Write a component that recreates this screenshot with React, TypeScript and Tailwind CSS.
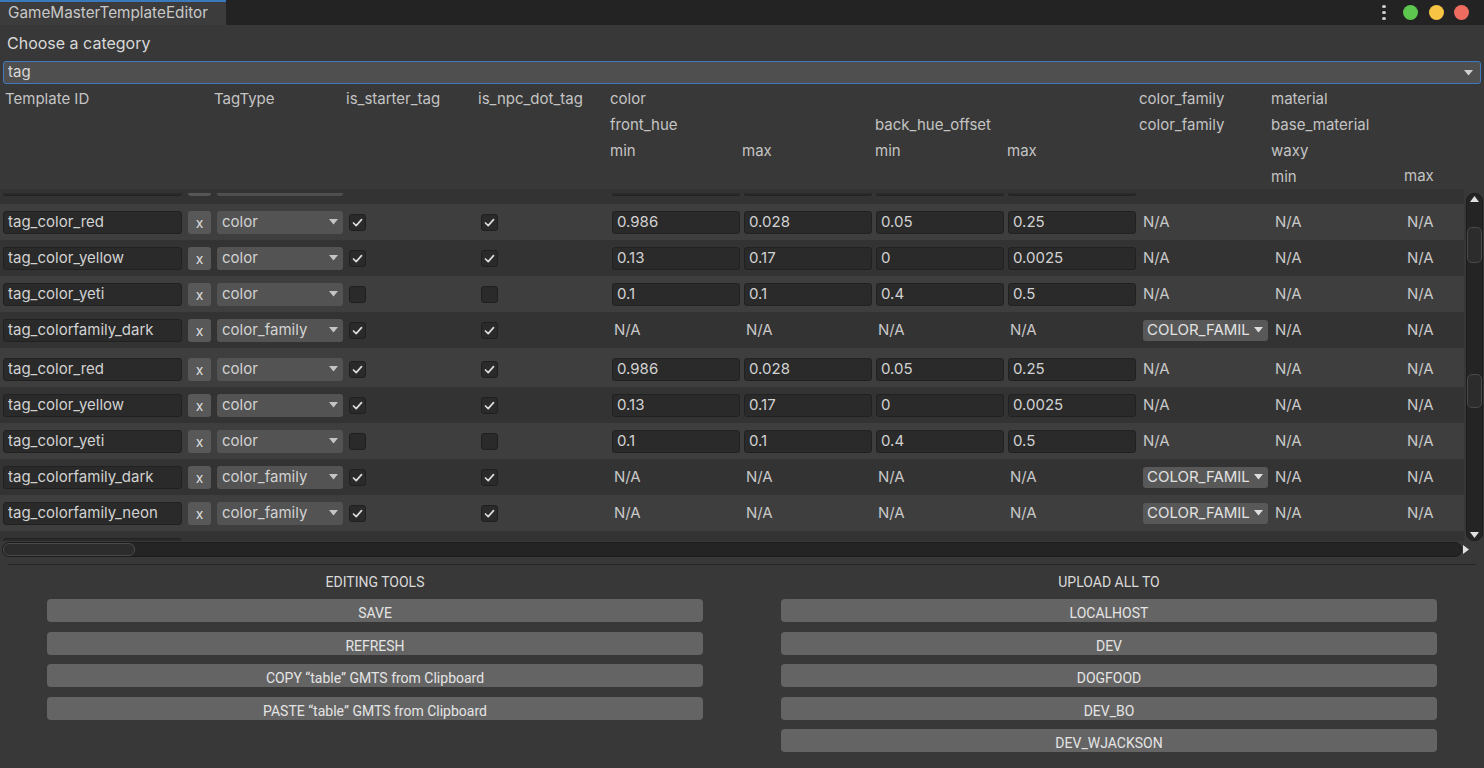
import React from "react";

type RowData = {
  id: string;
  type: string;
  starter: boolean;
  npc: boolean;
  nums: string[] | null;
  cf: boolean;
};

const rows: RowData[] = [
  { id: "tag_color_red", type: "color", starter: true, npc: true, nums: ["0.986", "0.028", "0.05", "0.25"], cf: false },
  { id: "tag_color_yellow", type: "color", starter: true, npc: true, nums: ["0.13", "0.17", "0", "0.0025"], cf: false },
  { id: "tag_color_yeti", type: "color", starter: false, npc: false, nums: ["0.1", "0.1", "0.4", "0.5"], cf: false },
  { id: "tag_colorfamily_dark", type: "color_family", starter: true, npc: true, nums: null, cf: true },
  { id: "tag_color_red", type: "color", starter: true, npc: true, nums: ["0.986", "0.028", "0.05", "0.25"], cf: false },
  { id: "tag_color_yellow", type: "color", starter: true, npc: true, nums: ["0.13", "0.17", "0", "0.0025"], cf: false },
  { id: "tag_color_yeti", type: "color", starter: false, npc: false, nums: ["0.1", "0.1", "0.4", "0.5"], cf: false },
  { id: "tag_colorfamily_dark", type: "color_family", starter: true, npc: true, nums: null, cf: true },
  { id: "tag_colorfamily_neon", type: "color_family", starter: true, npc: true, nums: null, cf: true },
];

function Arrow({ color = "#c4c4c4" }: { color?: string }) {
  return (
    <svg width="9" height="6" viewBox="0 0 9 6">
      <polygon points="0,0 9,0 4.5,5.5" fill={color} />
    </svg>
  );
}

function Check({ on }: { on: boolean }) {
  return (
    <div className="w-[17px] h-[17px] rounded-[3px] bg-[#2a2a2a] border border-[#1f1f1f] flex items-center justify-center">
      {on && (
        <svg width="13" height="13" viewBox="0 0 13 13">
          <polyline points="2.5,7 5.2,9.6 10.5,3.6" fill="none" stroke="#dcdcdc" strokeWidth="1.7" strokeLinecap="round" strokeLinejoin="round" />
        </svg>
      )}
    </div>
  );
}

function Row({ r, light, extra }: { r: RowData; light: boolean; extra?: boolean }) {
  return (
    <div
      className={`flex items-center shrink-0 ${extra ? "h-[39px] pt-[3px]" : "h-[36px]"} ${light ? "bg-[#3e3e3e]" : "bg-[#333333]"} text-[15px] text-[#d2d2d2]`}
    >
      <div className="w-[185px] pl-[3px] shrink-0">
        <div className="w-[179px] h-[23px] rounded-[3px] bg-[#2a2a2a] border border-[#212121] flex items-center pl-[4px] overflow-hidden whitespace-nowrap">
          {r.id}
        </div>
      </div>
      <div className="w-[29px] pl-[3px] shrink-0">
        <div className="w-[23px] h-[23px] rounded-[3px] bg-[#585858] flex items-center justify-center text-[14px] text-[#dedede]">x</div>
      </div>
      <div className="w-[132px] pl-[3px] shrink-0">
        <div className="w-[126px] h-[23px] rounded-[3px] bg-[#535353] flex items-center justify-between pl-[5px] pr-[5px]">
          <span>{r.type}</span>
          <Arrow />
        </div>
      </div>
      <div className="w-[132px] pl-[3px] shrink-0">
        <Check on={r.starter} />
      </div>
      <div className="w-[132px] pl-[3px] shrink-0">
        <Check on={r.npc} />
      </div>
      {r.nums
        ? r.nums.map((n, i) => (
            <div key={i} className="w-[132px] pl-[2px] shrink-0">
              <div className="w-[128px] h-[23px] rounded-[3px] bg-[#2a2a2a] border border-[#212121] flex items-center pl-[4px]">
                {n}
              </div>
            </div>
          ))
        : [0, 1, 2, 3].map((i) => (
            <div key={i} className="w-[132px] pl-[4px] shrink-0 text-[#c8c8c8]">
              N/A
            </div>
          ))}
      <div className="w-[132px] pl-[5px] shrink-0">
        {r.cf ? (
          <div className="w-[125px] h-[21px] rounded-[3px] bg-[#585858] flex items-center justify-between pl-[4px] pr-[5px] text-[#e2e2e2]">
            <span className="whitespace-nowrap">COLOR_FAMIL</span>
            <Arrow color="#dddddd" />
          </div>
        ) : (
          <span className="text-[#c8c8c8]">N/A</span>
        )}
      </div>
      <div className="w-[132px] pl-[5px] shrink-0 text-[#c8c8c8]">N/A</div>
      <div className="w-[62px] pl-[5px] shrink-0 text-[#c8c8c8]">N/A</div>
    </div>
  );
}

function HeaderCol({ w, lines, pl }: { w: string; lines: string[]; pl?: boolean }) {
  return (
    <div className={`${w} ${pl ? "pl-[5px]" : ""} shrink-0 flex flex-col`}>
      {lines.map((l, i) => (
        <div key={i} className="h-[26px] leading-[26px] whitespace-nowrap">
          {l}
        </div>
      ))}
    </div>
  );
}

function Btn({ label }: { label: string }) {
  return (
    <div className="h-[23px] rounded-[4px] bg-[#646464] flex items-center justify-center pt-[6px] text-[14px] text-[#e4e4e4] font-['Roboto',sans-serif]">
      {label}
    </div>
  );
}

export default function App() {
  return (
    <div className="w-[1484px] h-[768px] bg-[#383838] flex flex-col overflow-hidden font-['Inter','Noto_Sans',sans-serif] select-none">
      {/* tab bar */}
      <div className="h-[25px] bg-[#232323] flex items-stretch shrink-0">
        <div className="w-[226px] bg-[#3c3c3c] border-t-2 border-[#3a79bb] flex items-center pl-[8px] text-[15.3px] text-[#c8c8c8]">
          GameMasterTemplateEditor
        </div>
        <div className="flex-1" />
        <div className="flex items-center gap-[10.5px] pr-[15px]">
          <div className="flex flex-col gap-[2.5px] mr-[7px]">
            <div className="w-[3.5px] h-[3.5px] rounded-full bg-[#c8c8c8]" />
            <div className="w-[3.5px] h-[3.5px] rounded-full bg-[#c8c8c8]" />
            <div className="w-[3.5px] h-[3.5px] rounded-full bg-[#c8c8c8]" />
          </div>
          <div className="w-[15px] h-[15px] rounded-full bg-[#5cc64e]" />
          <div className="w-[15px] h-[15px] rounded-full bg-[#f7c443]" />
          <div className="w-[15px] h-[15px] rounded-full bg-[#ee6b5f]" />
        </div>
      </div>

      {/* category */}
      <div className="h-[35px] flex items-center pl-[7px] text-[16px] text-[#d8d8d8] shrink-0">Choose a category</div>
      <div className="mt-[1px] mx-[3px] h-[23px] rounded-[3px] bg-[#4f4f4f] border border-[#3f7ac0] flex items-center justify-between pl-[4px] pr-[7px] text-[15px] text-[#d8d8d8] shrink-0">
        <span>tag</span>
        <Arrow color="#d0d0d0" />
      </div>

      {/* header */}
      <div className="h-[105px] pt-[2px] flex text-[15px] text-[#c4c4c4] shrink-0 overflow-hidden">
        <HeaderCol w="w-[214px]" pl lines={["Template ID"]} />
        <HeaderCol w="w-[132px]" lines={["TagType"]} />
        <HeaderCol w="w-[132px]" lines={["is_starter_tag"]} />
        <HeaderCol w="w-[132px]" lines={["is_npc_dot_tag"]} />
        <HeaderCol w="w-[132px]" lines={["color", "front_hue", "min"]} />
        <HeaderCol w="w-[133px]" lines={["", "", "max"]} />
        <HeaderCol w="w-[132px]" lines={["", "back_hue_offset", "min"]} />
        <HeaderCol w="w-[132px]" lines={["", "", "max"]} />
        <HeaderCol w="w-[132px]" lines={["color_family", "color_family"]} />
        <HeaderCol w="w-[133px]" lines={["material", "base_material", "waxy", "min"]} />
        <HeaderCol w="w-[60px]" lines={["", "", "", "max"]} />
      </div>

      {/* scroll area */}
      <div className="h-[352px] flex shrink-0">
        <div className="w-[1464px] flex flex-col overflow-hidden">
          <div className="h-[15px] bg-[#333333] flex shrink-0 pt-[4px]">
            <div className="w-[185px] pl-[3px]"><div className="w-[179px] h-[3px] rounded-b-[3px] bg-[#2a2a2a] border-b border-[#222]" /></div>
            <div className="w-[29px] pl-[3px]"><div className="w-[23px] h-[3px] rounded-b-[3px] bg-[#555]" /></div>
            <div className="w-[132px] pl-[3px]"><div className="w-[126px] h-[3px] rounded-b-[3px] bg-[#4f4f4f]" /></div>
            <div className="w-[264px]" />
            <div className="w-[132px] pl-[2px]"><div className="w-[128px] h-[3px] rounded-b-[3px] bg-[#2a2a2a] border-b border-[#222]" /></div>
            <div className="w-[132px] pl-[2px]"><div className="w-[128px] h-[3px] rounded-b-[3px] bg-[#2a2a2a] border-b border-[#222]" /></div>
            <div className="w-[132px] pl-[2px]"><div className="w-[128px] h-[3px] rounded-b-[3px] bg-[#2a2a2a] border-b border-[#222]" /></div>
            <div className="w-[132px] pl-[2px]"><div className="w-[128px] h-[3px] rounded-b-[3px] bg-[#2a2a2a] border-b border-[#222]" /></div>
          </div>
          {rows.map((r, i) => (
            <Row key={i} r={r} light={i % 2 === 0} extra={i === 4} />
          ))}
          <div className="h-[10px] bg-[#333333] flex items-end shrink-0">
            <div className="ml-[3px] w-[178px] h-[3px] rounded-t-[3px] bg-[#2a2a2a] border-t border-[#222]" />
          </div>
        </div>
        <div className="w-[20px] flex justify-center pt-[4px] shrink-0">
          <div className="w-[17px] h-[348px] rounded-[8px] bg-[#242424] border border-[#1c1c1c] flex flex-col items-center">
            <svg width="9" height="6" viewBox="0 0 9 6" className="mt-[2px]">
              <polygon points="4.5,0 9,6 0,6" fill="#e0e0e0" />
            </svg>
            <div className="mt-[25px] w-[15px] h-[36px] rounded-[5px] bg-[#2c2c2c] border border-[#4a4a4a]" />
            <div className="mt-[111px] w-[15px] h-[34px] rounded-[5px] bg-[#2c2c2c] border border-[#4a4a4a]" />
            <div className="flex-1" />
            <svg width="9" height="6" viewBox="0 0 9 6" className="mb-[2px]">
              <polygon points="0,0 9,0 4.5,6" fill="#e0e0e0" />
            </svg>
          </div>
        </div>
      </div>

      {/* horizontal scrollbar */}
      <div className="h-[16px] flex items-center shrink-0">
        <div className="ml-[2px] w-[1460px] h-[15px] rounded-[7px] bg-[#242424] border border-[#1c1c1c] flex items-center">
          <div className="w-[132px] h-[13px] rounded-[6px] bg-[#2c2c2c] border border-[#4a4a4a]" />
        </div>
        <svg width="6" height="9" viewBox="0 0 6 9" className="ml-[1px]">
          <polygon points="0,0 6,4.5 0,9" fill="#e0e0e0" />
        </svg>
      </div>

      <div className="h-[7px] shrink-0" />
      <div className="mx-[8px] h-[1px] bg-[#262626] shrink-0" />

      {/* bottom tools */}
      <div className="flex px-[47px] gap-[78px] text-[14px] text-[#dadada] font-['Roboto',sans-serif]">
        <div className="flex-1 flex flex-col">
          <div className="h-[34px] flex items-center justify-center">EDITING TOOLS</div>
          <div className="flex flex-col gap-[9.5px]">
            <Btn label="SAVE" />
            <Btn label="REFRESH" />
            <Btn label="COPY “table” GMTS from Clipboard" />
            <Btn label="PASTE “table” GMTS from Clipboard" />
          </div>
        </div>
        <div className="flex-1 flex flex-col">
          <div className="h-[34px] flex items-center justify-center">UPLOAD ALL TO</div>
          <div className="flex flex-col gap-[9.5px]">
            <Btn label="LOCALHOST" />
            <Btn label="DEV" />
            <Btn label="DOGFOOD" />
            <Btn label="DEV_BO" />
            <Btn label="DEV_WJACKSON" />
          </div>
        </div>
      </div>
    </div>
  );
}
